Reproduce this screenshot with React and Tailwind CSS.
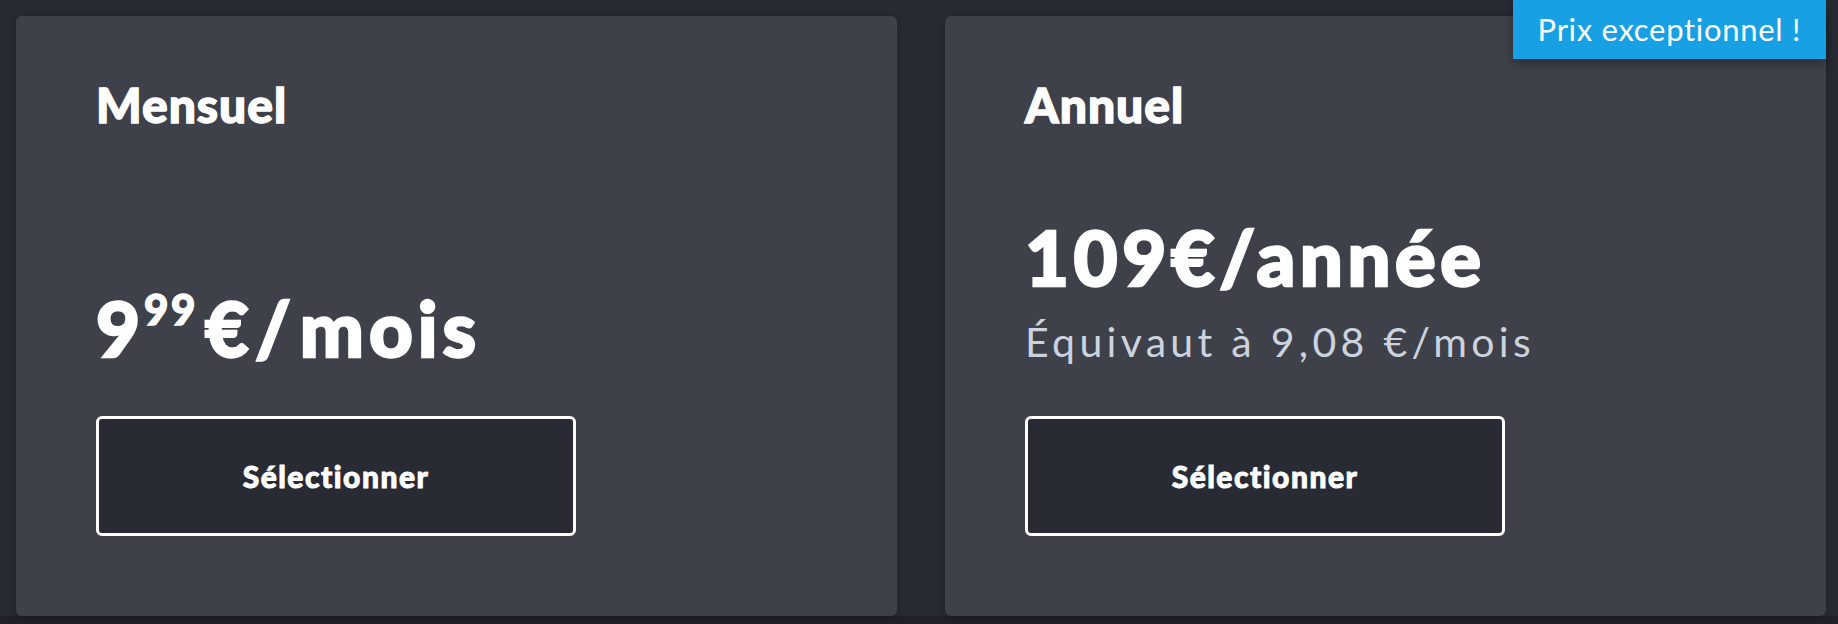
export default function App() {
  return (
    <div className="h-[624px] w-full flex flex-col bg-[#202227] font-[Lato,sans-serif] text-white overflow-hidden">
      <div className="bg-[#282b34] pt-4 pl-4 pr-3 grid grid-cols-2 gap-12">
        <div className="relative h-[600px] rounded-md bg-[#3e404a] shadow-[0_2px_8px_rgba(0,0,0,0.25)] flex flex-col px-20 pt-[65px] pb-20">
          <h2 className="text-[48px] leading-[48px] font-black tracking-[1px] [-webkit-text-stroke:1.4px_white]">Mensuel</h2>
          <div className="mt-auto">
            <div className="text-[76px] leading-[76px] font-black tracking-[4px] whitespace-nowrap [-webkit-text-stroke:2.4px_white]">
              9<span className="text-[42px] leading-[0] align-[32px] tracking-[2.5px] [-webkit-text-stroke:1.4px_white]">99</span>
              <span className="ml-[7px] mr-[3px] tracking-[6px]">€/</span><span className="tracking-[5px]">mois</span>
            </div>
            <button className="mt-[50px] w-[480px] h-[120px] rounded-md border-[3px] border-white bg-[#282b34] text-[30px] font-black tracking-[1.5px] text-white flex items-center justify-center [-webkit-text-stroke:0.9px_white]">
              Sélectionner
            </button>
          </div>
        </div>
        <div className="relative h-[600px] rounded-md bg-[#3e404a] shadow-[0_2px_8px_rgba(0,0,0,0.25)] flex flex-col px-20 pt-[65px] pb-20">
          <div className="absolute -top-4 right-0 h-[59px] px-[25px] flex items-center bg-[#17a0e3] shadow-[0_4px_10px_rgba(0,0,0,0.35)] text-[31px] leading-none tracking-[0.7px] text-white whitespace-nowrap">
            Prix exceptionnel !
          </div>
          <h2 className="text-[48px] leading-[48px] font-black tracking-[1px] [-webkit-text-stroke:1.4px_white]">Annuel</h2>
          <div className="mt-auto">
            <div className="text-[76px] leading-[76px] font-black tracking-[4.5px] whitespace-nowrap [-webkit-text-stroke:2.4px_white]">
              109€/année
            </div>
            <div className="mt-[26px] text-[41px] leading-[41px] text-[#cbd3df] tracking-[4.3px] whitespace-nowrap">
              Équivaut à 9,08 €/mois
            </div>
            <button className="mt-[54px] w-[480px] h-[120px] rounded-md border-[3px] border-white bg-[#282b34] text-[30px] font-black tracking-[1.5px] text-white flex items-center justify-center [-webkit-text-stroke:0.9px_white]">
              Sélectionner
            </button>
          </div>
        </div>
      </div>
      <div className="flex-1" />
    </div>
  );
}
